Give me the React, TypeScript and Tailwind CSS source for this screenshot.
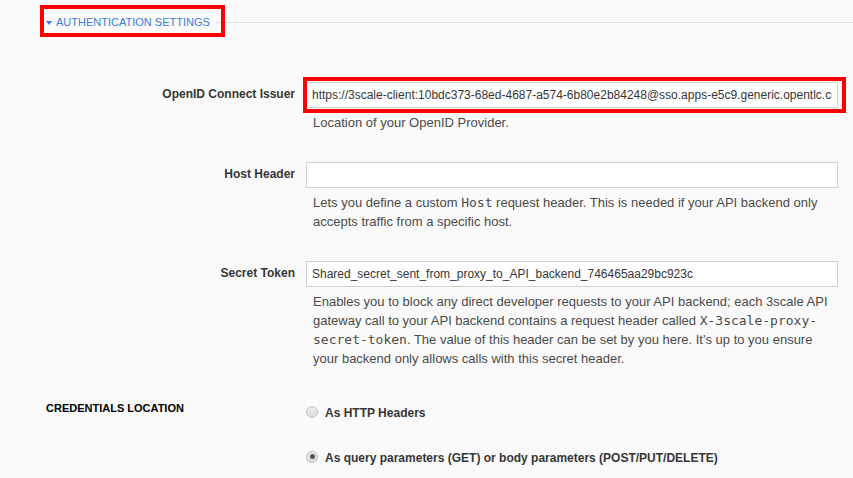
import React from "react";

function Caret() {
  return (
    <svg width="6" height="4" viewBox="0 0 6 4" className="shrink-0">
      <path d="M0 0 L6 0 L3 4 Z" fill="#3b7dd8" />
    </svg>
  );
}

function Field({
  label,
  value,
  highlight,
  children,
}: {
  label: string;
  value: string;
  highlight?: boolean;
  children: React.ReactNode;
}) {
  return (
    <div className="flex mb-[30px]">
      <div className="w-[295px] shrink-0 pt-[5px] text-right text-[12px] leading-[14px] font-bold text-[#363636]">
        {label}
      </div>
      <div className="ml-[11px] w-[532px]">
        <div className="relative">
          <input
            readOnly
            value={value}
            className="block h-[26px] w-full border border-[#d1d1d1] bg-white px-[5px] text-[12px] text-[#363636] outline-none"
          />
          {highlight && (
            <div className="pointer-events-none absolute -left-[3px] -right-[8px] -top-[5px] -bottom-[5px] border-[4px] border-[#ff0000]" />
          )}
        </div>
        <div className="mt-[5px] pl-[7px] text-[13px] leading-[19px] text-[#4a4a4a]">
          {children}
        </div>
      </div>
    </div>
  );
}

function Radio({ checked, label }: { checked?: boolean; label: string }) {
  return (
    <div className="flex items-center gap-[7px]">
      <span className="relative -mt-[3px] flex h-[12px] w-[12px] items-center justify-center rounded-full border border-[#c4c4c4] bg-gradient-to-b from-[#ececec] to-[#dcdcdc]">
        {checked && <span className="h-[5px] w-[5px] rounded-full bg-[#555]" />}
      </span>
      <span className="text-[12px] leading-[14px] font-bold text-[#363636]">{label}</span>
    </div>
  );
}

const mono = "font-['DejaVu_Sans_Mono',monospace]";

export default function App() {
  return (
    <div className="min-h-screen bg-[#fafafa] font-['Liberation_Sans',Arial,sans-serif]">
      {/* Section title */}
      <div className="flex items-center pt-[16px] pl-[46px]">
        <div className="relative flex items-center gap-[4px] text-[11px] leading-[13px] text-[#3b7dd8]">
          <Caret />
          <span>AUTHENTICATION SETTINGS</span>
          <div className="pointer-events-none absolute -left-[6px] -right-[15px] -top-[11px] -bottom-[8px] border-[4px] border-[#ff0000]" />
        </div>
        <div className="ml-[6px] flex-1 border-t border-[#dddddd]" />
      </div>

      <div className="mt-[53px]">
        <Field
          label="OpenID Connect Issuer"
          value="https://3scale-client:10bdc373-68ed-4687-a574-6b80e2b84248@sso.apps-e5c9.generic.opentlc.com"
          highlight
        >
          Location of your OpenID Provider.
        </Field>

        <Field label="Host Header" value="">
          Lets you define a custom <span className={mono}>Host</span> request header. This is needed if your API
          backend only accepts traffic from a specific host.
        </Field>

        <Field label="Secret Token" value="Shared_secret_sent_from_proxy_to_API_backend_746465aa29bc923c">
          Enables you to block any direct developer requests to your API backend; each 3scale API gateway call to
          your API backend contains a request header called{" "}
          <span className={mono}>X-3scale-proxy-secret-token</span>. The value of this header can be set by you
          here. It's up to you ensure your backend only allows calls with this secret header.
        </Field>
      </div>

      {/* Credentials location */}
      <div className="mt-[34px] flex">
        <div className="w-[306px] shrink-0 pl-[46px] text-[11px] leading-[13px] font-bold text-black">
          CREDENTIALS LOCATION
        </div>
        <div className="flex flex-col gap-[31px] pt-[4px]">
          <Radio label="As HTTP Headers" />
          <Radio checked label="As query parameters (GET) or body parameters (POST/PUT/DELETE)" />
        </div>
      </div>
    </div>
  );
}
